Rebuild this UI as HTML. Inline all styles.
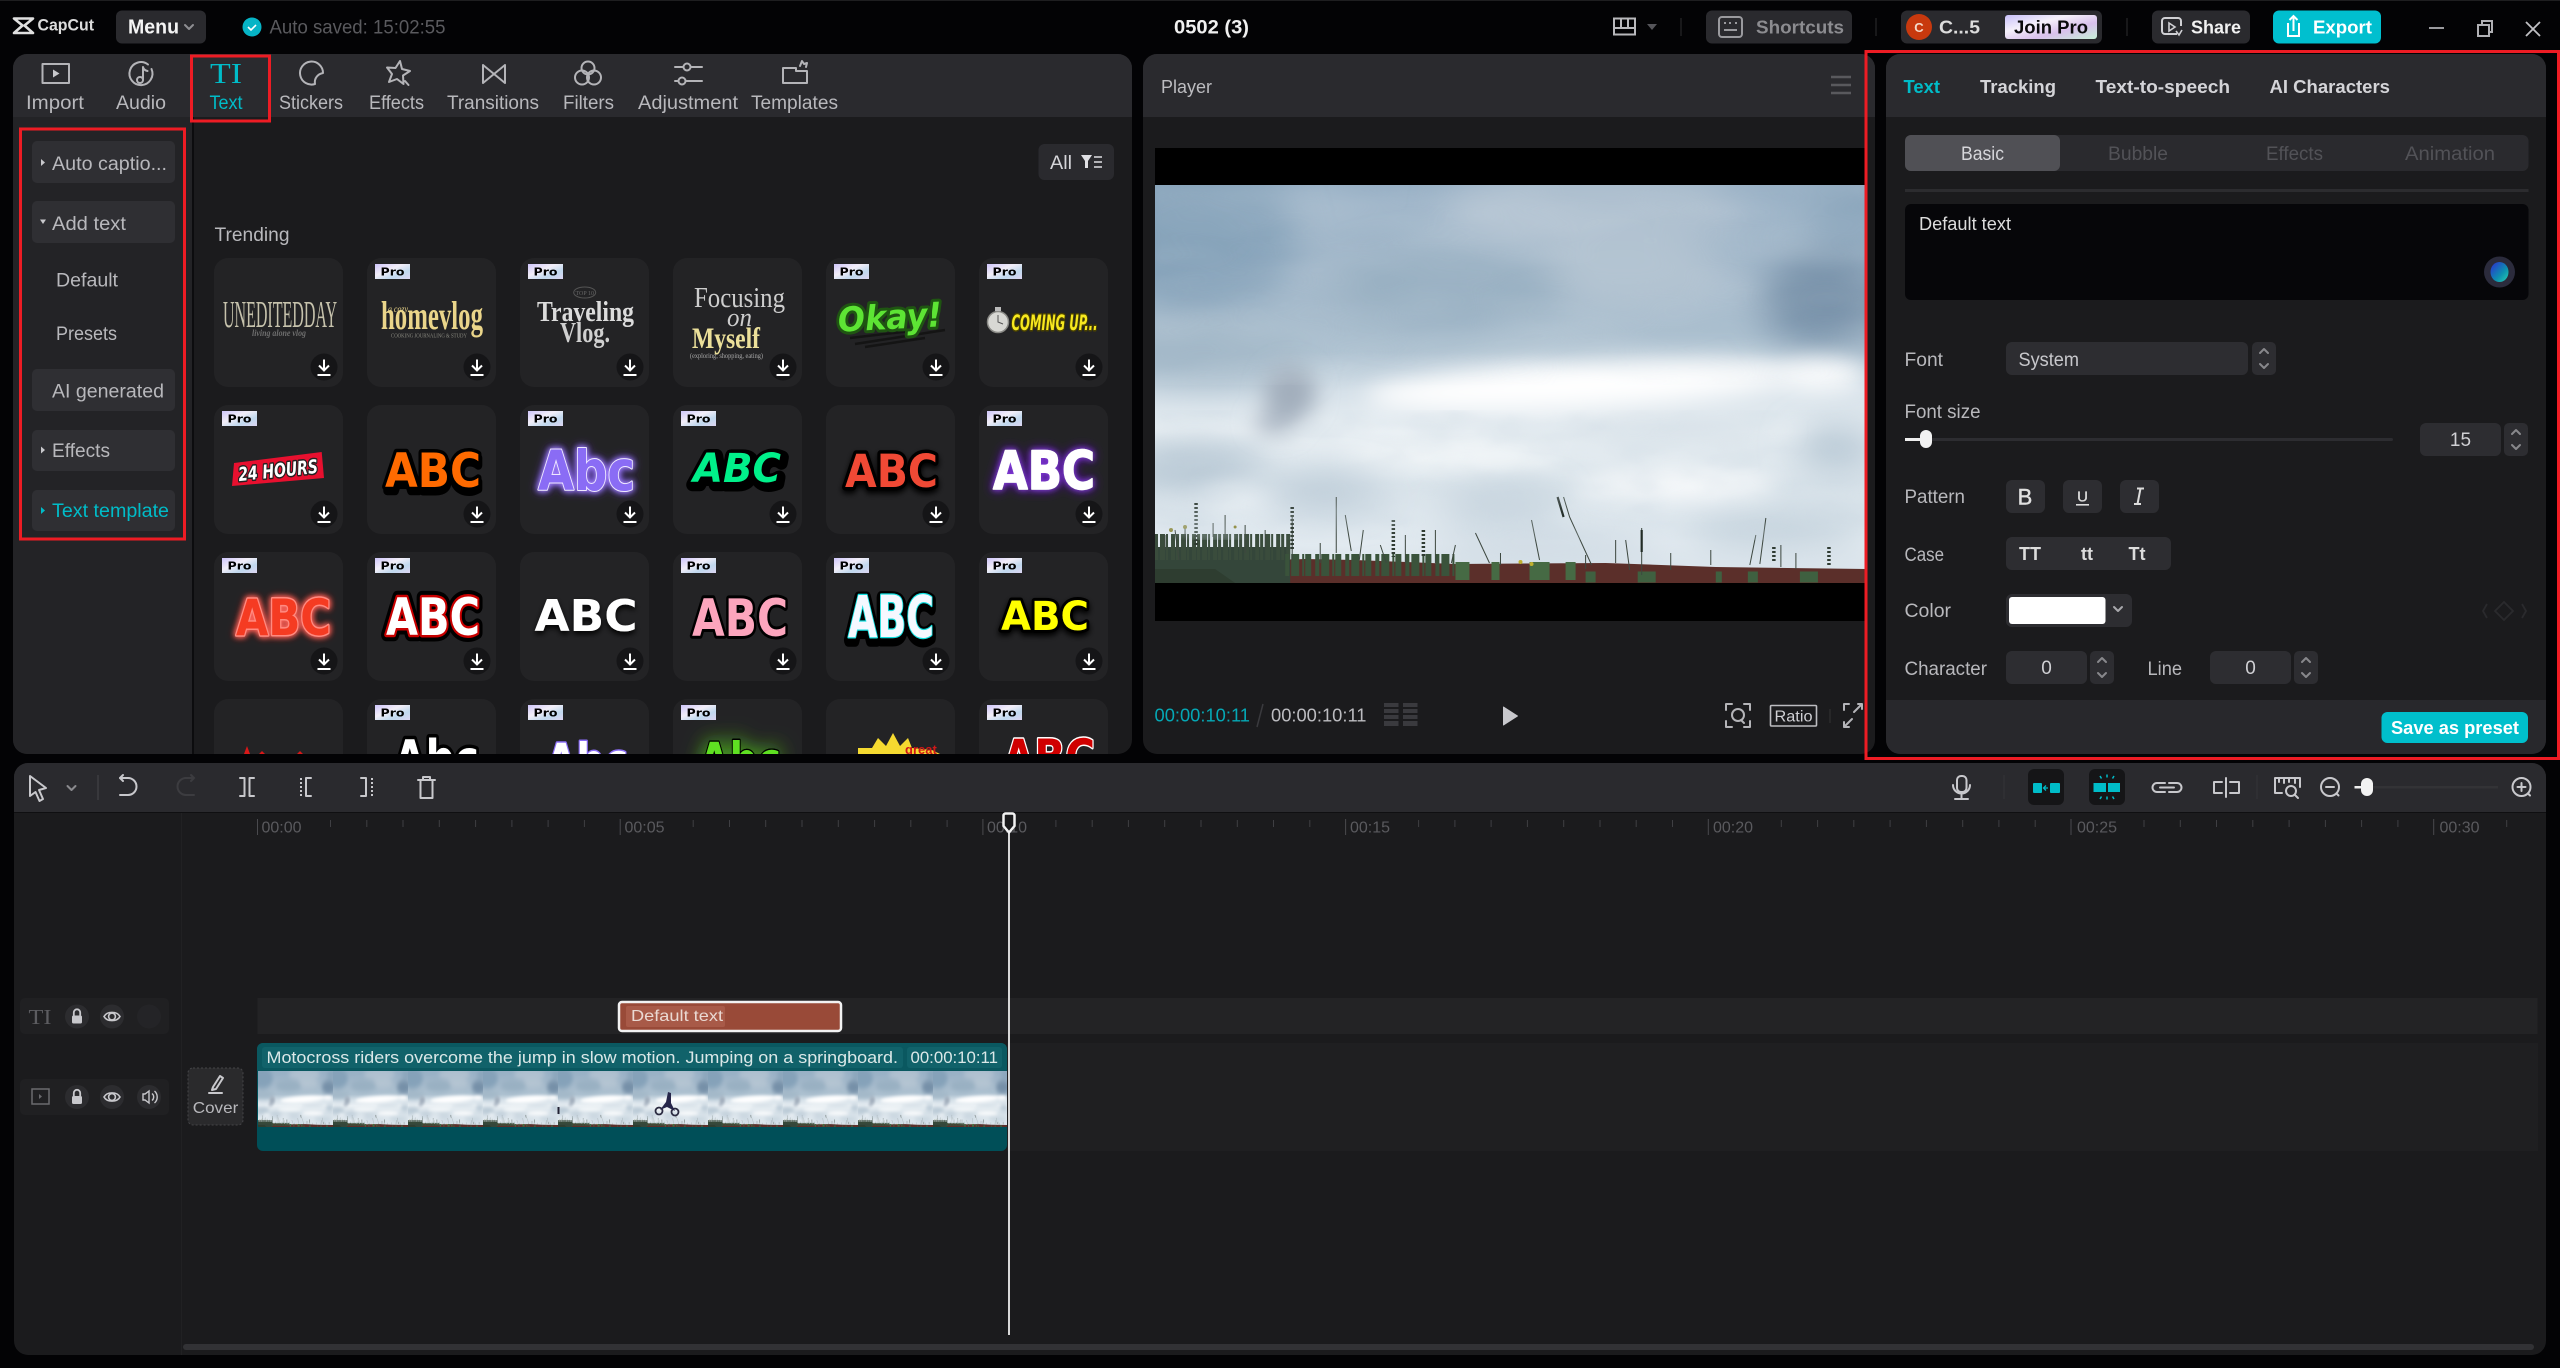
<!DOCTYPE html>
<html lang="en">
<head>
<meta charset="utf-8">
<title>CapCut</title>
<style>
html,body{margin:0;padding:0;background:#030305;width:2560px;height:1368px;overflow:hidden}
svg{display:block;position:absolute;left:0;top:0}
svg text{font-family:"Liberation Sans",sans-serif;white-space:pre}
.l{font-size:19px;fill:#b8b8bc}
.b{font-size:18px;font-weight:700;fill:#d4d4d8}
.sv{font-family:"Liberation Serif",serif!important}
.dj{font-family:"DejaVu Sans",sans-serif!important}
.ab{font-weight:700;paint-order:stroke fill;stroke-linejoin:round;font-family:"DejaVu Sans",sans-serif!important}
.i{fill:none;stroke:#b4b4b8;stroke-width:2;stroke-linecap:round;stroke-linejoin:round}
.d{fill:none;stroke:#c8c8cc;stroke-width:2;stroke-linecap:round;stroke-linejoin:round}
.st{fill:none;stroke:#88888c;stroke-width:2;stroke-linecap:round;stroke-linejoin:round}
.tl{font-size:16px;fill:#5a5a5e}
</style>
</head>
<body>
<svg width="2560" height="1368" viewBox="0 0 2560 1368" xmlns="http://www.w3.org/2000/svg">
<defs>
<clipPath id="pL"><rect x="13" y="54" width="1119" height="700" rx="14"/></clipPath>
<clipPath id="pP"><rect x="1143" y="54" width="732" height="700" rx="14"/></clipPath>
<clipPath id="pR"><rect x="1886" y="54" width="660" height="700" rx="14"/></clipPath>
<clipPath id="pT"><rect x="14" y="763" width="2532" height="592" rx="14"/></clipPath>
<clipPath id="vc"><rect width="710" height="398"/></clipPath>
<linearGradient id="proG" x1="0" y1="0" x2="1" y2="1"><stop offset="0" stop-color="#cfc6fa"/><stop offset=".4" stop-color="#f2eef8"/><stop offset=".7" stop-color="#c0d8ee"/><stop offset="1" stop-color="#ddd6f2"/></linearGradient>
<linearGradient id="joinG" x1="0" y1="0" x2="1" y2="1"><stop offset="0" stop-color="#c8c0fa"/><stop offset=".35" stop-color="#f5f0fa"/><stop offset=".65" stop-color="#d8c0ec"/><stop offset="1" stop-color="#c8f0d8"/></linearGradient>
<linearGradient id="skyG" x1="0" y1="0" x2="0" y2="1"><stop offset="0" stop-color="#98b0c5"/><stop offset=".22" stop-color="#a3b8ca"/><stop offset=".42" stop-color="#adc1d0"/><stop offset=".52" stop-color="#d6e1e9"/><stop offset=".62" stop-color="#eaf0f4"/><stop offset=".75" stop-color="#d9e3ea"/><stop offset=".9" stop-color="#e2eaf0"/><stop offset="1" stop-color="#d8e2ea"/></linearGradient>
<linearGradient id="orbG" x1="0" y1="0" x2="1" y2="1"><stop offset="0" stop-color="#2d2bd0"/><stop offset=".6" stop-color="#0d8fb0"/><stop offset="1" stop-color="#29d0b0"/></linearGradient>
<filter id="bl" x="-60%" y="-60%" width="220%" height="220%"><feGaussianBlur stdDeviation="18"/></filter>
<filter id="bl2" x="-40%" y="-80%" width="180%" height="260%"><feGaussianBlur stdDeviation="12"/></filter>
<filter id="bl3" x="-60%" y="-60%" width="220%" height="220%"><feGaussianBlur stdDeviation="11"/></filter>
<filter id="cn" x="0" y="0" width="100%" height="100%"><feTurbulence type="fractalNoise" baseFrequency=".005 .016" numOctaves="3" seed="8"/><feColorMatrix values="0 0 0 0 1 0 0 0 0 1 0 0 0 0 1 1.3 0 0 0 -.52"/><feGaussianBlur stdDeviation="4"/></filter>
<filter id="cd" x="0" y="0" width="100%" height="100%"><feTurbulence type="fractalNoise" baseFrequency=".006 .02" numOctaves="3" seed="21"/><feColorMatrix values="0 0 0 0 .5 0 0 0 0 .6 0 0 0 0 .68 1.3 0 0 0 -.54"/><feGaussianBlur stdDeviation="4"/></filter>
<filter id="cl" x="0" y="0" width="100%" height="100%"><feTurbulence type="fractalNoise" baseFrequency=".012 .035" numOctaves="4" seed="5"/><feColorMatrix values="0 0 0 0 .6 0 0 0 0 .69 0 0 0 0 .76 1.8 0 0 0 -.72"/><feGaussianBlur stdDeviation="2.500"/></filter>
<filter id="gPu" x="-40%" y="-50%" width="180%" height="200%"><feDropShadow dx="0" dy="0" stdDeviation="3" flood-color="#a888ff"/><feDropShadow dx="0" dy="0" stdDeviation="4" flood-color="#7a50f0"/></filter>
<filter id="gWh" x="-40%" y="-50%" width="180%" height="200%"><feDropShadow dx="0" dy="0" stdDeviation="3" flood-color="#8a40e0"/><feDropShadow dx="0" dy="0" stdDeviation="5" flood-color="#5a18b0"/></filter>
<filter id="gRe" x="-40%" y="-50%" width="180%" height="200%"><feDropShadow dx="0" dy="0" stdDeviation="3" flood-color="#ff6a60"/><feDropShadow dx="0" dy="0" stdDeviation="3" flood-color="#e03a30"/></filter>
<filter id="gGr" x="-40%" y="-60%" width="180%" height="220%"><feDropShadow dx="0" dy="0" stdDeviation="10" flood-color="#52c81e"/></filter>
<filter id="gBk" x="-30%" y="-40%" width="160%" height="180%"><feDropShadow dx="0" dy="3" stdDeviation="3" flood-color="#000"/></filter>

<g id="sky">
<rect width="710" height="398" fill="url(#skyG)"/>
<g filter="url(#bl)">
<ellipse cx="40" cy="50" rx="100" ry="75" fill="#85a2b9"/>
<ellipse cx="440" cy="25" rx="150" ry="40" fill="#b0c1d0"/>
<ellipse cx="470" cy="90" rx="100" ry="35" fill="#b4c4d2"/>
<ellipse cx="290" cy="105" rx="120" ry="40" fill="#99b0c2"/>
<ellipse cx="670" cy="115" rx="65" ry="48" fill="#7690a8"/>
<ellipse cx="695" cy="25" rx="45" ry="35" fill="#8ba6bc"/>
<ellipse cx="50" cy="170" rx="100" ry="30" fill="#a3b8c8"/>
<ellipse cx="40" cy="280" rx="70" ry="18" fill="#a9bccb"/>
<ellipse cx="170" cy="308" rx="55" ry="15" fill="#b6c6d3"/>
<ellipse cx="345" cy="318" rx="60" ry="10" fill="#b4c4d1"/>
<ellipse cx="680" cy="262" rx="40" ry="20" fill="#afc1cf"/>
<ellipse cx="620" cy="345" rx="90" ry="14" fill="#bacad6"/>
<ellipse cx="390" cy="362" rx="120" ry="10" fill="#c2d0db"/>
</g>
<g filter="url(#bl2)">
<ellipse cx="430" cy="200" rx="220" ry="24" fill="#fff" transform="rotate(-3 430 200)"/>
<ellipse cx="660" cy="190" rx="50" ry="16" fill="#fff"/>
<ellipse cx="300" cy="272" rx="110" ry="10" fill="#f8fafb"/>
<ellipse cx="520" cy="300" rx="100" ry="14" fill="#fbfcfd"/>
<ellipse cx="80" cy="312" rx="30" ry="8" fill="#f2f6f9"/>
<ellipse cx="520" cy="245" rx="110" ry="8" fill="#cdd9e2"/>
</g>
<g filter="url(#bl3)"><ellipse cx="135" cy="208" rx="26" ry="28" fill="#a2aebc"/><ellipse cx="120" cy="238" rx="22" ry="12" fill="#aeb9c6"/></g>
<path d="M0 398V372C60 368 110 376 150 374L200 375 300 379 450 378 560 382 710 384V398Z" fill="#5b2f2a"/>
<rect y="362" width="135" height="36" fill="#34463a"/>
<path d="M0 362H135" fill="none" stroke="#3a4c3c" stroke-width="26" stroke-dasharray="3 2 5 1 2 3 4 1"/>
<path d="M130 380H300" fill="none" stroke="#3a533b" stroke-width="22" stroke-dasharray="4 2 8 3 2 1 6 4"/>
<path d="M300 386H420" fill="none" stroke="#466a44" stroke-width="18" stroke-dasharray="14 22 8 30 20 16"/>
<path d="M430 392H710" fill="none" stroke="#3f6040" stroke-width="11" stroke-dasharray="10 42 18 60 6 26"/>
<path d="M0 398V384H60L80 398Z" fill="#2e3d30"/>
<g fill="none" stroke="#3d473f" stroke-width="1">
<path d="M137 330V375M181 312V368M190 330l6 36M208 345l-4 30M408 312l6 20 22 48M376 335l8 40M486 343V390M470 355l4 30M460 355V378M610 333l-6 46M515 368V385M280 345V378M20 345l4 30M90 340V368M70 330V355M58 338V352M320 348l14 30M345 368V380M555 365V380M110 345V365M10 350V365M30 340V358M165 358V378M225 360l6 18M250 350V378M300 360l-4 18M430 370V384M600 350l-6 30M625 360V382M640 368V384"/>
</g>
<g fill="none" stroke="#2f3b32" stroke-width="3.500" stroke-dasharray="2 2">
<path d="M41 318V362M137 322V365M238 335V372M268 345V372M673 362V380M618 362V378"/>
</g>
<path d="M402 312l6 20M486 345v22" fill="none" stroke="#222c26" stroke-width="2.200"/>
<circle cx="16" cy="345" r="2" fill="#8e8a3a"/><circle cx="30" cy="342" r="2" fill="#8e8a3a"/><circle cx="80" cy="342" r="1.500" fill="#8e8a3a"/><circle cx="365" cy="377" r="2" fill="#c0b030"/><circle cx="376" cy="379" r="2" fill="#c0b030"/>
</g>

<g id="dl"><circle r="13.5" fill="#151517"/><path d="M0-7.5V3.5M-5-1.5L0 3.5 5-1.5M-6.5 8H6.5" fill="none" stroke="#fff" stroke-width="2"/></g>
<g id="pro"><rect width="35" height="15" fill="url(#proG)"/><text x="5.5" y="11.5" class="dj" font-size="11" font-weight="700" textLength="24" lengthAdjust="spacingAndGlyphs" fill="#000">Pro</text></g>
<path id="chev" d="M-4-2L0 2 4-2" fill="none" stroke-linecap="round" stroke-linejoin="round" stroke-width="2"/>
<g id="stp"><rect x="-12" y="-16.5" width="24" height="33" rx="5" fill="#2d2d31"/><path class="st" d="M-4-5.5L0-9.5 4-5.5M-4 5.5L0 9.5 4 5.5"/></g>
<g id="tk" fill="#3f3f43"><rect x="72.5" width="1" height="7"/><rect x="108.8" width="1" height="7"/><rect x="145" width="1" height="7"/><rect x="181.3" width="1" height="7"/><rect x="217.6" width="1" height="7"/><rect x="253.9" width="1" height="7"/><rect x="290.1" width="1" height="7"/><rect x="326.4" width="1" height="7"/></g>
<g id="lock"><rect x="-5" y="-1" width="10" height="8" rx="1.5" fill="#c8c8cc"/><path d="M-3.2-1V-4a3.2 3.2 0 0 1 6.4 0V-1" fill="none" stroke="#c8c8cc" stroke-width="1.8"/></g>
<g id="eye"><path d="M-8 0C-5-5.5 5-5.5 8 0 5 5.5-5 5.5-8 0Z" fill="none" stroke="#c8c8cc" stroke-width="1.6"/><circle r="3.4" fill="none" stroke="#c8c8cc" stroke-width="1.6"/></g>
<clipPath id="vcl"><rect x="257" y="1043" width="750" height="108" rx="6"/></clipPath>
</defs>

<rect width="2560" height="1" fill="#1e1e20"/>

<!-- TOP BAR -->
<path d="M14 18.5H33L24.5 25.5 33 33H14L22.5 25.5Z" fill="none" stroke="#e0e0e0" stroke-width="2.6" stroke-linejoin="round"/>
<text x="37.5" y="30.5" font-size="17" font-weight="700" fill="#dcdcdc" textLength="56.5" lengthAdjust="spacingAndGlyphs">CapCut</text>
<rect x="116" y="10.5" width="90" height="33" rx="6" fill="#2a2a2e"/>
<text x="128" y="33.5" font-size="20" font-weight="700" fill="#f4f4f4" textLength="51" lengthAdjust="spacingAndGlyphs">Menu</text>
<use href="#chev" x="189" y="27" stroke="#8e8e92"/>
<circle cx="252" cy="27" r="9.5" fill="#06b4c6"/><path d="M248 27l3 3 5-5" fill="none" stroke="#fff" stroke-width="1.6"/>
<text x="269.5" y="33.5" font-size="19" fill="#5a5a5e" textLength="176" lengthAdjust="spacingAndGlyphs">Auto saved: 15:02:55</text>
<text x="1174" y="33.5" font-size="19" font-weight="700" fill="#f0f0f0" textLength="75" lengthAdjust="spacingAndGlyphs">0502 (3)</text>
<g fill="none" stroke="#b8b8bc" stroke-width="2"><rect x="1614" y="18.5" width="21" height="16"/><path d="M1621 18.5V28M1628 18.5V28M1614 28H1635"/></g>
<path d="M1647 24H1657L1652 30Z" fill="#55555a"/>
<rect x="1680.5" y="18" width="1" height="18" fill="#2d2d30"/>
<rect x="1706" y="10.5" width="146" height="33" rx="6" fill="#2a2a2e"/>
<g fill="none" stroke="#9a9a9e" stroke-width="2"><rect x="1719" y="17" width="23" height="20" rx="3"/><path d="M1724 23h2M1729 23h2M1735 23h2M1724 30h13"/></g>
<text x="1756" y="33.5" font-size="18" font-weight="700" fill="#8c8c90" textLength="88" lengthAdjust="spacingAndGlyphs">Shortcuts</text>
<rect x="1875.5" y="18" width="1" height="18" fill="#2d2d30"/>
<rect x="1901" y="10.5" width="201" height="33" rx="6" fill="#2a2a2e"/>
<circle cx="1919" cy="27" r="13" fill="#c8390e"/><text x="1919" y="32" font-size="13" text-anchor="middle" fill="#f3d8c8" font-weight="700">C</text>
<text x="1939" y="33.5" font-size="18" font-weight="700" fill="#dcdcdc" textLength="41" lengthAdjust="spacingAndGlyphs">C...5</text>
<rect x="2005" y="15" width="92" height="24" rx="3" fill="url(#joinG)"/>
<text x="2014" y="33.5" font-size="18" font-weight="700" fill="#0a0a0c" textLength="74" lengthAdjust="spacingAndGlyphs">Join Pro</text>
<rect x="2126.5" y="18" width="1" height="18" fill="#2d2d30"/>
<rect x="2152" y="10.5" width="98" height="33" rx="6" fill="#2a2a2e"/>
<path d="M2177 34H2165a3 3 0 0 1-3-3V21a3 3 0 0 1 3-3H2178a3 3 0 0 1 3 3V26" fill="none" stroke="#d0d0d4" stroke-width="2"/><path d="M2169 23l6 4-6 4ZM2176 31l3 4 3-5" fill="none" stroke="#d0d0d4" stroke-width="1.6"/>
<text x="2191" y="33.5" font-size="18" font-weight="700" fill="#f2f2f2" textLength="50" lengthAdjust="spacingAndGlyphs">Share</text>
<rect x="2273" y="10.5" width="108" height="33" rx="6" fill="#00bfcf"/>
<path d="M2288 23V36H2299V23M2293.5 31V16M2289.5 20l4-4 4 4" fill="none" stroke="#fff" stroke-width="2"/>
<text x="2313" y="33.5" font-size="18" font-weight="700" fill="#fff" textLength="59" lengthAdjust="spacingAndGlyphs">Export</text>
<rect x="2429" y="27" width="15" height="2" fill="#9a9a9e"/>
<g fill="none" stroke="#b0b0b4" stroke-width="2"><rect x="2478" y="25" width="11" height="11"/><path d="M2482 25V21H2492V32H2489"/></g>
<path d="M2526 22L2540 36M2540 22L2526 36" stroke="#c0c0c4" stroke-width="1.8"/>

<!-- LEFT PANEL -->
<g clip-path="url(#pL)">
<rect x="13" y="54" width="1119" height="700" fill="#1b1b1d"/>
<rect x="13" y="117" width="180" height="637" fill="#232326"/>
<rect x="192" y="117" width="2" height="637" fill="#0c0c0e"/>
<rect x="13" y="54" width="1119" height="63" fill="#2a2a2e"/>
</g>
<!-- tab icons -->
<rect x="42.5" y="64" width="26.5" height="19" class="i"/><path d="M53 69.5l6.5 4-6.5 4Z" fill="#c8c8cc"/>
<path class="i" d="M148 64.5A11.5 11.5 0 1 0 151.500 69"/><path class="i" d="M143 67V80M143 67c.5 2.500 2.500 3.500 4.500 4"/><circle class="i" cx="140" cy="80" r="3"/>
<text x="210" y="83" class="sv" font-size="29" fill="#00bcc8" textLength="32" lengthAdjust="spacingAndGlyphs">TI</text>
<path class="i" d="M323 73A11.500 11.500 0 1 0 315 84C314 78 318 74 323 73Z"/>
<path class="i" d="M400 61l2 8 8 2-7 4.500 .5 8.500-6.500-5-8 3 3-8-5-6.500 8.500 .5ZM405 81l3.500 4"/>
<path class="i" d="M483 65V83M505 65V83M483 65L505 83M505 65L483 83" stroke-width="1.800"/>
<g class="i"><circle cx="588" cy="68" r="6.5"/><circle cx="582" cy="77.5" r="7"/><circle cx="594" cy="77.5" r="7"/></g>
<path class="i" d="M675 67H683M691 67H702M675 81H678M686 81H702"/><circle class="i" cx="687" cy="67" r="3.5"/><circle class="i" cx="682" cy="81" r="3.5"/>
<path class="i" d="M783 68H796V71H807V83H783ZM800 66l2-5 2 3 3-1-1 4"/>

<text x="26" y="109" class="l" textLength="58" lengthAdjust="spacingAndGlyphs">Import</text>
<text x="116" y="109" class="l" textLength="50" lengthAdjust="spacingAndGlyphs">Audio</text>
<text x="209.5" y="109" class="l" style="fill:#00bcc8" textLength="33" lengthAdjust="spacingAndGlyphs">Text</text>
<text x="279" y="109" class="l" textLength="64" lengthAdjust="spacingAndGlyphs">Stickers</text>
<text x="369" y="109" class="l" textLength="55" lengthAdjust="spacingAndGlyphs">Effects</text>
<text x="447" y="109" class="l" textLength="92" lengthAdjust="spacingAndGlyphs">Transitions</text>
<text x="563" y="109" class="l" textLength="51" lengthAdjust="spacingAndGlyphs">Filters</text>
<text x="638" y="109" class="l" textLength="100" lengthAdjust="spacingAndGlyphs">Adjustment</text>
<text x="751" y="109" class="l" textLength="87" lengthAdjust="spacingAndGlyphs">Templates</text>

<!-- sidebar -->
<g fill="#2f2f33"><rect x="32" y="141" width="143" height="42" rx="5"/><rect x="32" y="201" width="143" height="42" rx="5"/><rect x="32" y="369" width="143" height="42" rx="5"/><rect x="32" y="430" width="143" height="41" rx="5"/><rect x="32" y="490" width="143" height="41" rx="5"/></g>
<path d="M41 159l4 3.5-4 3.5Z" fill="#c8c8cc"/><path d="M40 219.500h6l-3 4.500Z" fill="#c8c8cc"/><path d="M41 446.500l4 3.500-4 3.500Z" fill="#c8c8cc"/><path d="M41 507l4 3.500-4 3.500Z" fill="#00bcc8"/>
<text x="52" y="170" class="l" textLength="115" lengthAdjust="spacingAndGlyphs">Auto captio...</text>
<text x="52" y="230" class="l" textLength="74" lengthAdjust="spacingAndGlyphs">Add text</text>
<text x="56" y="286.500" class="l" textLength="62" lengthAdjust="spacingAndGlyphs">Default</text>
<text x="56" y="340" class="l" textLength="61" lengthAdjust="spacingAndGlyphs">Presets</text>
<text x="52" y="397.500" class="l" textLength="112" lengthAdjust="spacingAndGlyphs">AI generated</text>
<text x="52" y="457" class="l" textLength="58" lengthAdjust="spacingAndGlyphs">Effects</text>
<text x="52" y="517" class="l" style="fill:#00bcc8" textLength="117" lengthAdjust="spacingAndGlyphs">Text template</text>

<!-- grid -->
<rect x="1038.500" y="144" width="75.500" height="36" rx="6" fill="#2a2a2e"/>
<text x="1050" y="169" class="l" style="fill:#d4d4d8" textLength="22" lengthAdjust="spacingAndGlyphs">All</text>
<path d="M1081 155H1092L1088 161V168H1085V161Z" fill="#e0e0e4"/><path d="M1094 157H1102M1094 162H1102M1094 167H1102" stroke="#e0e0e4" stroke-width="1.6"/>
<text x="214.500" y="241" class="l" textLength="75" lengthAdjust="spacingAndGlyphs">Trending</text>

<g clip-path="url(#pL)">
<g fill="#232325">
<rect x="214" y="258" width="129" height="129" rx="14"/><rect x="367" y="258" width="129" height="129" rx="14"/><rect x="520" y="258" width="129" height="129" rx="14"/><rect x="673" y="258" width="129" height="129" rx="14"/><rect x="826" y="258" width="129" height="129" rx="14"/><rect x="979" y="258" width="129" height="129" rx="14"/>
<rect x="214" y="405" width="129" height="129" rx="14"/><rect x="367" y="405" width="129" height="129" rx="14"/><rect x="520" y="405" width="129" height="129" rx="14"/><rect x="673" y="405" width="129" height="129" rx="14"/><rect x="826" y="405" width="129" height="129" rx="14"/><rect x="979" y="405" width="129" height="129" rx="14"/>
<rect x="214" y="552" width="129" height="129" rx="14"/><rect x="367" y="552" width="129" height="129" rx="14"/><rect x="520" y="552" width="129" height="129" rx="14"/><rect x="673" y="552" width="129" height="129" rx="14"/><rect x="826" y="552" width="129" height="129" rx="14"/><rect x="979" y="552" width="129" height="129" rx="14"/>
<rect x="214" y="699" width="129" height="129" rx="14"/><rect x="367" y="699" width="129" height="129" rx="14"/><rect x="520" y="699" width="129" height="129" rx="14"/><rect x="673" y="699" width="129" height="129" rx="14"/><rect x="826" y="699" width="129" height="129" rx="14"/><rect x="979" y="699" width="129" height="129" rx="14"/>
</g>

<!-- row 1 -->
<text x="223" y="327" class="sv" font-size="38" fill="#c6c2ac" textLength="114" lengthAdjust="spacingAndGlyphs">UNEDITEDDAY</text>
<text x="252" y="336" class="sv" font-size="9" font-style="italic" font-weight="700" fill="#6e6e6e" textLength="54" lengthAdjust="spacingAndGlyphs">living alone vlog</text>

<text x="388" y="312" class="sv" font-size="9" font-style="italic" fill="#e8d388" textLength="20" lengthAdjust="spacingAndGlyphs">a cozy</text>
<text x="381" y="329" class="sv" font-size="40" font-weight="700" fill="#ead58a" textLength="102" lengthAdjust="spacingAndGlyphs">homevlog</text>
<text x="391" y="337.500" class="sv" font-size="6.500" fill="#8a8a80" textLength="76" lengthAdjust="spacingAndGlyphs">COOKING JOURNALING &amp; STUDY</text>

<ellipse cx="584.700" cy="292.500" rx="11" ry="5.500" fill="none" stroke="#555" stroke-width="1"/>
<text x="584.700" y="295" class="sv" font-size="6" text-anchor="middle" fill="#666">TOP 10</text>
<text x="537" y="321" class="sv" font-size="28" font-weight="700" fill="#dcdcdc" textLength="97" lengthAdjust="spacingAndGlyphs">Traveling</text>
<text x="560" y="342" class="sv" font-size="28" font-weight="700" fill="#d0d0d0" textLength="50" lengthAdjust="spacingAndGlyphs">Vlog.</text>

<text x="694" y="307" class="sv" font-size="29" fill="#cdcdcd" textLength="91" lengthAdjust="spacingAndGlyphs">Focusing</text>
<text x="727" y="326" class="sv" font-size="26" font-style="italic" fill="#cdcdcd" textLength="25" lengthAdjust="spacingAndGlyphs">on</text>
<text x="692" y="348" class="sv" font-size="30" font-weight="700" fill="#ece09a" textLength="68" lengthAdjust="spacingAndGlyphs">Myself</text>
<text x="690" y="358" class="sv" font-size="7" fill="#aaa" textLength="73" lengthAdjust="spacingAndGlyphs">(exploring, shopping, eating)</text>

<path d="M855 344L945 330M865 347L925 338M850 338L920 330" stroke="#141414" stroke-width="2.500"/>
<text x="838" y="329" font-size="34" font-style="italic" class="ab" fill="#5de434" stroke="#1f5512" stroke-width="6" textLength="104" lengthAdjust="spacingAndGlyphs" transform="rotate(-3 890 320)">Okay!</text>

<circle cx="998" cy="322" r="10.500" fill="#d8d8d4" stroke="#8a8a86" stroke-width="1.500"/><path d="M998 315v7l5 2" stroke="#555" fill="none"/><rect x="995" y="307" width="6" height="4" fill="#bbb"/>
<text x="1011.500" y="330" font-size="21" font-style="italic" class="ab" fill="#f7e81f" stroke="#4a4200" stroke-width="3" textLength="86" lengthAdjust="spacingAndGlyphs">COMING UP...</text>

<!-- row 2 -->
<path d="M234 463L321.700 452 324 478 232 486Z" fill="#e8102f"/>
<text x="238" y="477" font-size="19" font-style="italic" class="ab" fill="#fff" stroke="#222" stroke-width="3" textLength="80" lengthAdjust="spacingAndGlyphs" transform="rotate(-6 278 470)">24 HOURS</text>

<text x="387" y="491" font-size="47" class="ab" fill="#000" stroke="#000" stroke-width="9" textLength="94" lengthAdjust="spacingAndGlyphs">ABC</text>
<text x="385" y="487" font-size="47" class="ab" fill="#ff6a00" stroke="#000" stroke-width="7" textLength="96" lengthAdjust="spacingAndGlyphs">ABC</text>

<text x="538" y="490" font-size="55" class="ab" fill="#8a6cf5" stroke="#efe9ff" stroke-width="2" textLength="97" lengthAdjust="spacingAndGlyphs" filter="url(#gPu)">Abc</text>

<text x="695" y="485" font-size="40" font-style="italic" class="ab" fill="#000" stroke="#000" stroke-width="13" textLength="88" lengthAdjust="spacingAndGlyphs">ABC</text>
<text x="693" y="482" font-size="40" font-style="italic" class="ab" fill="#00f08a" stroke="#000" stroke-width="6" textLength="88" lengthAdjust="spacingAndGlyphs">ABC</text>

<text x="845" y="487" font-size="45" class="ab" fill="#f04a35" stroke="#000" stroke-width="7" textLength="93" lengthAdjust="spacingAndGlyphs" filter="url(#gBk)">ABC</text>

<text x="993" y="489" font-size="53" class="ab" fill="#fff" stroke="#fff" stroke-width="1.500" textLength="102" lengthAdjust="spacingAndGlyphs" filter="url(#gWh)">ABC</text>

<!-- row 3 -->
<text x="236" y="635" font-size="50" class="ab" fill="#f53a20" stroke="#ff8a80" stroke-width="3" textLength="95" lengthAdjust="spacingAndGlyphs" filter="url(#gRe)">ABC</text>
<text x="386" y="635" font-size="52" class="ab" fill="#000" stroke="#000" stroke-width="13" textLength="94" lengthAdjust="spacingAndGlyphs">ABC</text>
<text x="386" y="635" font-size="52" class="ab" fill="#fff" stroke="#c80000" stroke-width="5" textLength="94" lengthAdjust="spacingAndGlyphs">ABC</text>
<text x="534.500" y="631" font-size="44" class="ab" fill="#fff" textLength="103" lengthAdjust="spacingAndGlyphs" filter="url(#gBk)">ABC</text>
<text x="692" y="636" font-size="52" class="ab" fill="#fca5bd" stroke="#000" stroke-width="6" textLength="96" lengthAdjust="spacingAndGlyphs">ABC</text>
<text x="848" y="640" font-size="58" class="ab" fill="#000" stroke="#000" stroke-width="13" textLength="86" lengthAdjust="spacingAndGlyphs">ABC</text>
<text x="848" y="637" font-size="58" class="ab" fill="#f5f8ff" stroke="#10e0e0" stroke-width="2.500" textLength="86" lengthAdjust="spacingAndGlyphs">ABC</text>
<text x="1001" y="630" font-size="40" class="ab" fill="#ffff00" stroke="#000" stroke-width="6" textLength="88" lengthAdjust="spacingAndGlyphs" filter="url(#gBk)">ABC</text>

<!-- row 4 -->
<path d="M247 746l3 8h-6ZM262 751l3 3h-6ZM300 751l3 3h-6Z" fill="#d81818"/>
<text x="394" y="777" font-size="52" class="ab" fill="#fff" stroke="#000" stroke-width="7" textLength="85" lengthAdjust="spacingAndGlyphs">Abc</text>
<text x="546" y="779" font-size="50" class="ab" fill="#fff" stroke="#8a6cf5" stroke-width="3" textLength="82" lengthAdjust="spacingAndGlyphs">Abc</text>
<text x="699" y="778" font-size="50" class="ab" fill="#5ee020" stroke="#000" stroke-width="3" textLength="82" lengthAdjust="spacingAndGlyphs" filter="url(#gGr)">Abc</text>
<path d="M858 748l14 0 6-10 8 8 7-13 7 13 8-8 4 10 20 2 8 4H858Z" fill="#f5da30"/>
<text x="905" y="754" font-size="13" font-weight="700" fill="#d01818">great</text>
<text x="1003" y="775" font-size="50" class="ab" fill="#d00000" stroke="#fff" stroke-width="3" textLength="92" lengthAdjust="spacingAndGlyphs">ABC</text>

<!-- download + pro -->
<use href="#dl" x="324" y="367"/><use href="#dl" x="477" y="367"/><use href="#dl" x="630" y="367"/><use href="#dl" x="783" y="367"/><use href="#dl" x="936" y="367"/><use href="#dl" x="1089" y="367"/>
<use href="#dl" x="324" y="514"/><use href="#dl" x="477" y="514"/><use href="#dl" x="630" y="514"/><use href="#dl" x="783" y="514"/><use href="#dl" x="936" y="514"/><use href="#dl" x="1089" y="514"/>
<use href="#dl" x="324" y="661"/><use href="#dl" x="477" y="661"/><use href="#dl" x="630" y="661"/><use href="#dl" x="783" y="661"/><use href="#dl" x="936" y="661"/><use href="#dl" x="1089" y="661"/>
<use href="#pro" x="375" y="264"/><use href="#pro" x="528" y="264"/><use href="#pro" x="834" y="264"/><use href="#pro" x="987" y="264"/>
<use href="#pro" x="222" y="411"/><use href="#pro" x="528" y="411"/><use href="#pro" x="681" y="411"/><use href="#pro" x="987" y="411"/>
<use href="#pro" x="222" y="558"/><use href="#pro" x="375" y="558"/><use href="#pro" x="681" y="558"/><use href="#pro" x="834" y="558"/><use href="#pro" x="987" y="558"/>
<use href="#pro" x="375" y="705"/><use href="#pro" x="528" y="705"/><use href="#pro" x="681" y="705"/><use href="#pro" x="987" y="705"/>
</g>

<!-- PLAYER -->
<g clip-path="url(#pP)">
<rect x="1143" y="54" width="732" height="700" fill="#1b1b1d"/>
<rect x="1143" y="54" width="732" height="63" fill="#2a2a2e"/>
</g>
<text x="1161" y="93" font-size="18" fill="#bcbcc0" textLength="51" lengthAdjust="spacingAndGlyphs">Player</text>
<path d="M1831 77H1851M1831 85H1851M1831 93H1851" stroke="#59595d" stroke-width="2.500"/>
<rect x="1155" y="148" width="711" height="473" fill="#000"/>
<svg x="1155" y="185" width="711" height="398" viewBox="0 0 710 398" preserveAspectRatio="none">
<g clip-path="url(#vc)"><use href="#sky"/>
<rect width="710" height="200" filter="url(#cn)" opacity=".22"/>
<rect width="710" height="200" filter="url(#cd)" opacity=".2"/>
<rect y="225" width="710" height="130" filter="url(#cl)" opacity=".5"/>
</g></svg>
<text x="1154.500" y="721.500" font-size="18" fill="#05a8b5" textLength="95.500" lengthAdjust="spacingAndGlyphs">00:00:10:11</text>
<path d="M1257 727L1263 704" stroke="#3a3a3e" stroke-width="1.500"/>
<text x="1271" y="721.500" font-size="18" fill="#bcbcc0" textLength="95.500" lengthAdjust="spacingAndGlyphs">00:00:10:11</text>
<g fill="#3a3a3e"><rect x="1384" y="703" width="14.500" height="4"/><rect x="1403" y="703" width="14.500" height="4"/><rect x="1384" y="709" width="14.500" height="4"/><rect x="1403" y="709" width="14.500" height="4"/><rect x="1384" y="715" width="14.500" height="4"/><rect x="1403" y="715" width="14.500" height="4"/><rect x="1384" y="721" width="14.500" height="5"/><rect x="1403" y="721" width="14.500" height="5"/></g>
<path d="M1503.500 707L1517.500 716 1503.500 725Z" fill="#c8c8cc" stroke="#c8c8cc" stroke-width="1" stroke-linejoin="round"/>
<path class="i" d="M1726 710V704H1732M1744 704H1750V710M1726 721V727H1732M1744 727H1750V721"/><circle class="i" cx="1738" cy="715" r="6"/><path class="i" d="M1741 720l3 3"/>
<rect x="1770.500" y="705.500" width="46" height="20.500" rx="1" fill="none" stroke="#bcbcc0" stroke-width="1.600"/>
<text x="1793.500" y="721.500" font-size="16" text-anchor="middle" fill="#d0d0d4" textLength="38" lengthAdjust="spacingAndGlyphs">Ratio</text>
<rect x="1829.500" y="709" width="1" height="14" fill="#333"/>
<path class="i" d="M1844 710V704H1849M1858 704H1862V709M1844 722V727H1849M1862 704L1854 712M1844 727L1852 719"/>

<!-- RIGHT PANEL -->
<g clip-path="url(#pR)">
<rect x="1886" y="54" width="660" height="700" fill="#1b1b1d"/>
<rect x="1886" y="54" width="660" height="63" fill="#2a2a2e"/>
<rect x="1886" y="700" width="660" height="54" fill="#28282c"/>
</g>
<text x="1903.500" y="93" class="b" style="fill:#00bcc8" textLength="36.500" lengthAdjust="spacingAndGlyphs">Text</text>
<text x="1980" y="93" class="b" textLength="76" lengthAdjust="spacingAndGlyphs">Tracking</text>
<text x="2095.500" y="93" class="b" textLength="134.500" lengthAdjust="spacingAndGlyphs">Text-to-speech</text>
<text x="2269.500" y="93" class="b" textLength="120.500" lengthAdjust="spacingAndGlyphs">AI Characters</text>
<rect x="1905" y="135" width="623.500" height="36" rx="6" fill="#2a2a2e"/>
<rect x="1905" y="135" width="155" height="36" rx="6" fill="#505055"/>
<text x="1961" y="160" class="l" style="fill:#d6d6da" textLength="43" lengthAdjust="spacingAndGlyphs">Basic</text>
<text x="2108" y="160" class="l" style="fill:#525257" textLength="60" lengthAdjust="spacingAndGlyphs">Bubble</text>
<text x="2266" y="160" class="l" style="fill:#525257" textLength="57" lengthAdjust="spacingAndGlyphs">Effects</text>
<text x="2405" y="160" class="l" style="fill:#525257" textLength="90" lengthAdjust="spacingAndGlyphs">Animation</text>
<rect x="1905" y="189" width="623.500" height="3" fill="#2c2c2f"/>
<rect x="1905" y="204" width="623.500" height="96" rx="6" fill="#060609"/>
<text x="1919" y="230" font-size="18" fill="#dcdcdc" textLength="92" lengthAdjust="spacingAndGlyphs">Default text</text>
<circle cx="2499.500" cy="272" r="15.500" fill="#2b2b3c"/><ellipse cx="2499.500" cy="272" rx="9" ry="10" fill="url(#orbG)"/>

<text x="1904.500" y="366" class="l" textLength="38.500" lengthAdjust="spacingAndGlyphs">Font</text>
<rect x="2006" y="342" width="242" height="33" rx="6" fill="#2d2d31"/>
<text x="2018.500" y="366" class="l" style="fill:#c8c8cc" textLength="60.500" lengthAdjust="spacingAndGlyphs">System</text>
<use href="#stp" x="2264" y="358.500"/>
<text x="1904.500" y="418" class="l" textLength="76" lengthAdjust="spacingAndGlyphs">Font size</text>
<rect x="1905" y="438" width="488" height="3" rx="1.500" fill="#2d2d31"/>
<rect x="1905" y="438" width="18" height="3" fill="#eee"/>
<rect x="1920" y="430" width="12" height="18" rx="6" fill="#f2f2f2"/>
<rect x="2420" y="423" width="81" height="33" rx="6" fill="#2d2d31"/>
<text x="2460.500" y="446" class="l" style="fill:#d0d0d4" text-anchor="middle">15</text>
<use href="#stp" x="2516" y="439.500"/>
<text x="1904.500" y="503" class="l" textLength="60.500" lengthAdjust="spacingAndGlyphs">Pattern</text>
<g fill="#2d2d31"><rect x="2006" y="480" width="39" height="33" rx="6"/><rect x="2063" y="480" width="39" height="33" rx="6"/><rect x="2120" y="480" width="39" height="33" rx="6"/><rect x="2006" y="537" width="165" height="33" rx="6"/><rect x="2006" y="594" width="126" height="33" rx="6"/><rect x="2006" y="651" width="81" height="33" rx="6"/><rect x="2210" y="651" width="81" height="33" rx="6"/></g>
<text x="2025" y="504.500" font-size="22" text-anchor="middle" fill="#e0e0e0" stroke="#e0e0e0" stroke-width=".4">B</text>
<text x="2082.500" y="501.500" font-size="15" text-anchor="middle" fill="#dcdcdc" stroke="#dcdcdc" stroke-width=".3">U</text><rect x="2076" y="504" width="13" height="1.600" fill="#dcdcdc"/>
<path d="M2137 488.500h7M2134 504h7M2140.500 488.500l-3 15.500" stroke="#dcdcdc" stroke-width="2" fill="none"/>
<text x="1904.500" y="561" class="l" textLength="39.500" lengthAdjust="spacingAndGlyphs">Case</text>
<text x="2030" y="560" font-size="18" font-weight="700" text-anchor="middle" fill="#dcdcdc">TT</text>
<text x="2087" y="560" font-size="18" font-weight="700" text-anchor="middle" fill="#dcdcdc">tt</text>
<text x="2137" y="560" font-size="18" font-weight="700" text-anchor="middle" fill="#dcdcdc">Tt</text>
<text x="1904.500" y="617" class="l" textLength="46.500" lengthAdjust="spacingAndGlyphs">Color</text>
<rect x="2009" y="597" width="96.500" height="27" rx="3" fill="#fff"/>
<use href="#chev" x="2118" y="609" stroke="#a8a8ac"/>
<path d="M2487 604l-4 7 4 7M2522 604l4 7-4 7M2504 602l9 9-9 9-9-9Z" fill="none" stroke="#2a2a2d" stroke-width="1.800"/>
<text x="1904.500" y="675" class="l" textLength="82.500" lengthAdjust="spacingAndGlyphs">Character</text>
<text x="2046.500" y="674" class="l" style="fill:#d0d0d4" text-anchor="middle">0</text>
<use href="#stp" x="2102" y="667.500"/>
<text x="2147.500" y="675" class="l" textLength="34.500" lengthAdjust="spacingAndGlyphs">Line</text>
<text x="2250.500" y="674" class="l" style="fill:#d0d0d4" text-anchor="middle">0</text>
<use href="#stp" x="2306" y="667.500"/>
<rect x="2381.500" y="712" width="146.500" height="31" rx="6" fill="#00bfcc"/>
<text x="2391" y="734" class="b" style="fill:#fff" textLength="128" lengthAdjust="spacingAndGlyphs">Save as preset</text>

<!-- TIMELINE -->
<g clip-path="url(#pT)">
<rect x="14" y="763" width="2532" height="592" fill="#1b1b1d"/>
<rect x="14" y="763" width="2532" height="49" fill="#2a2a2e"/>
<rect x="14" y="812" width="2532" height="1" fill="#0f0f11"/>
<rect x="181" y="813" width="1" height="542" fill="#212123"/>
<rect x="257.500" y="998" width="2280" height="36" fill="#232325"/>
<rect x="1007" y="1043" width="1531" height="108" fill="#1f1f21"/>
</g>
<!-- toolbar left -->
<path class="d" d="M30 776L46 788 39 790 43 799 39.500 801 35.500 792 30 796Z" stroke-width="1.800"/>
<use href="#chev" x="71.500" y="788" stroke="#8a8a8e"/>
<rect x="97.500" y="775" width="1" height="25" fill="#46464a"/>
<path class="d" d="M120 778H128a8.500 8.500 0 0 1 0 17H120"/><path class="d" d="M123 775l-3 3 3 3" stroke-width="1.600"/>
<path d="M194 778H186a8.500 8.500 0 0 0 0 17H194M191 775l3 3-3 3" fill="none" stroke="#3c3c40" stroke-width="2" stroke-linecap="round"/>
<path class="d" d="M240 778H244.500V796H240M254 778H249.500V796H254" stroke-width="1.800"/>
<path class="d" d="M311 778H306V796H311" stroke-width="1.800"/><path d="M301 778V796" stroke="#c8c8cc" stroke-width="2" stroke-dasharray="2 2"/>
<path class="d" d="M361 778H366V796H361" stroke-width="1.800"/><path d="M372 778V796" stroke="#c8c8cc" stroke-width="2" stroke-dasharray="2 2"/>
<path class="d" d="M418 780H435M423 780V777H430V780M420.500 780V798H432.500V780"/>

<!-- toolbar right -->
<rect x="1957" y="776" width="9.500" height="16" rx="4" class="d"/>
<path class="d" d="M1953 785a8.500 8.500 0 0 0 17 0M1961.500 793.500V798M1955 799H1968" stroke-width="1.600"/>
<rect x="2003.500" y="775" width="1" height="24" fill="#343438"/>
<rect x="2028" y="769" width="36" height="36" rx="6" fill="#151517"/>
<rect x="2089" y="769" width="36" height="36" rx="6" fill="#151517"/>
<rect x="2033" y="783" width="9" height="10" rx="1" fill="#00bcc8"/>
<rect x="2050" y="783" width="10" height="10" rx="1" fill="#00bcc8"/>
<path d="M2048 788H2044M2046 785.500L2043.500 788 2046 790.500" fill="none" stroke="#00bcc8" stroke-width="1.300"/>
<rect x="2093.500" y="783" width="26.500" height="9" fill="#00bcc8"/><rect x="2106" y="783" width="2" height="9" fill="#151517"/>
<path d="M2107 774.500v3M2100 776l1.500 2.500M2114 776l-1.500 2.500M2107 796.500v3M2100 799l1.500-2.500M2114 799l-1.500-2.500" stroke="#00bcc8" stroke-width="1.500"/>
<path class="d" d="M2165 783H2157a3.500 3.500 0 0 0 0 9H2165M2169 783H2177a3.500 3.500 0 0 1 0 9H2169M2160 787.500H2174"/>
<path class="d" d="M2222 782H2214V793H2222M2230 782H2239V793H2230M2226 778V797" stroke-width="1.800"/>
<rect x="2256.500" y="775" width="1" height="24" fill="#343438"/>
<path class="d" d="M2282 793H2275V778H2300V787M2279 778V782M2284 778V783M2289 778V782M2295 778V783" stroke-width="1.600"/>
<circle class="d" cx="2291" cy="791" r="5" stroke-width="1.600"/><path class="d" d="M2295 795l3 3" stroke-width="1.600"/>
<circle class="d" cx="2330" cy="787" r="9"/><path class="d" d="M2326 787H2334M2336.500 793.500l2 2"/>
<rect x="2361" y="786" width="137" height="2.500" fill="#333336"/>
<rect x="2354.500" y="786" width="10" height="2.500" fill="#eee"/>
<rect x="2361" y="778" width="12" height="18" rx="6" fill="#f2f2f2"/>
<circle class="d" cx="2521.500" cy="787" r="9"/><path class="d" d="M2517.500 787H2525.500M2521.500 783V791M2528 793.500l2 2"/>

<!-- ruler -->
<use href="#tk" x="257.500" y="820"/><use href="#tk" x="620.200" y="820"/><use href="#tk" x="982.900" y="820"/><use href="#tk" x="1345.600" y="820"/><use href="#tk" x="1708.300" y="820"/><use href="#tk" x="2071" y="820"/>
<g transform="translate(2433.700 820)"><rect x="72.500" width="1" height="7" fill="#3f3f43"/></g>
<g fill="#4a4a4e"><rect x="257" y="819" width="1" height="16"/><rect x="619.700" y="819" width="1" height="16"/><rect x="982.400" y="819" width="1" height="16"/><rect x="1345.100" y="819" width="1" height="16"/><rect x="1707.800" y="819" width="1" height="16"/><rect x="2070.500" y="819" width="1" height="16"/><rect x="2433.200" y="819" width="1" height="16"/></g>
<text x="261.500" y="832.500" class="tl">00:00</text><text x="624.500" y="832.500" class="tl">00:05</text><text x="987" y="832.500" class="tl">00:10</text><text x="1350" y="832.500" class="tl">00:15</text><text x="1713" y="832.500" class="tl">00:20</text><text x="2077" y="832.500" class="tl">00:25</text><text x="2439.500" y="832.500" class="tl">00:30</text>

<!-- track heads -->
<rect x="20" y="998" width="149" height="36" rx="5" fill="#202022"/>
<rect x="20" y="1079" width="149" height="36" rx="5" fill="#202022"/>
<text x="28.500" y="1024" class="sv" font-size="21" fill="#5c5c60" textLength="23" lengthAdjust="spacingAndGlyphs">TI</text>
<circle cx="77" cy="1016.500" r="12" fill="#2c2c2f"/><circle cx="112" cy="1016.500" r="12" fill="#2c2c2f"/><circle cx="149" cy="1016.500" r="12" fill="#242427"/>
<use href="#lock" x="77" y="1016.500"/><use href="#eye" x="112" y="1016.500"/>
<rect x="32" y="1089" width="17" height="15" fill="none" stroke="#6a6a6e" stroke-width="1.500"/><path d="M39 1094l3 2.500-3 2.500Z" fill="#6a6a6e"/>
<circle cx="77" cy="1097" r="12" fill="#2c2c2f"/><circle cx="112" cy="1097" r="12" fill="#2c2c2f"/><circle cx="149" cy="1097" r="12" fill="#2c2c2f"/>
<use href="#lock" x="77" y="1097"/><use href="#eye" x="112" y="1097"/>
<path d="M143 1094H145L149 1091V1103L145 1100H143ZM152 1093.500a4.500 4.500 0 0 1 0 7M154.500 1091a8 8 0 0 1 0 12" fill="none" stroke="#c8c8cc" stroke-width="1.400"/>
<rect x="188" y="1068" width="55" height="57" rx="5" fill="#2a2a2c" stroke="#454548" stroke-width="1" stroke-dasharray="2 2"/>
<path class="d" d="M213 1087L220 1076 223 1078 216 1089 212 1090ZM209 1093H222" stroke-width="1.600"/>
<text x="215.500" y="1113" font-size="16" text-anchor="middle" fill="#b8b8bc" textLength="45.500" lengthAdjust="spacingAndGlyphs">Cover</text>

<!-- clips -->
<rect x="619" y="1002" width="222" height="29" rx="3" fill="#994a38" stroke="#f2f2f2" stroke-width="2.500"/>
<rect x="626" y="1006" width="99" height="21" rx="2" fill="#a85a48"/>
<text x="631" y="1021" font-size="16" fill="#ead9d3" textLength="92" lengthAdjust="spacingAndGlyphs">Default text</text>

<g clip-path="url(#vcl)">
<rect x="257" y="1043" width="750" height="108" fill="#004f58"/>
<rect x="257" y="1043" width="750" height="28" fill="#0a5860"/>
<rect x="262" y="1047" width="641" height="21" rx="3" fill="#11626a"/>
<rect x="907" y="1047" width="95" height="21" rx="3" fill="#11626a"/>
<svg x="258" y="1071" width="75" height="56" viewBox="0 0 710 398" preserveAspectRatio="none"><use href="#sky"/></svg>
<svg x="333" y="1071" width="75" height="56" viewBox="0 0 710 398" preserveAspectRatio="none"><use href="#sky"/></svg>
<svg x="408" y="1071" width="75" height="56" viewBox="0 0 710 398" preserveAspectRatio="none"><use href="#sky"/></svg>
<svg x="483" y="1071" width="75" height="56" viewBox="0 0 710 398" preserveAspectRatio="none"><use href="#sky"/></svg>
<svg x="558" y="1071" width="75" height="56" viewBox="0 0 710 398" preserveAspectRatio="none"><use href="#sky"/></svg>
<svg x="633" y="1071" width="75" height="56" viewBox="0 0 710 398" preserveAspectRatio="none"><use href="#sky"/></svg>
<svg x="708" y="1071" width="75" height="56" viewBox="0 0 710 398" preserveAspectRatio="none"><use href="#sky"/></svg>
<svg x="783" y="1071" width="75" height="56" viewBox="0 0 710 398" preserveAspectRatio="none"><use href="#sky"/></svg>
<svg x="858" y="1071" width="75" height="56" viewBox="0 0 710 398" preserveAspectRatio="none"><use href="#sky"/></svg>
<svg x="933" y="1071" width="74" height="56" viewBox="0 0 710 398" preserveAspectRatio="none"><use href="#sky"/></svg>
<rect x="557.500" y="1107" width="2" height="7" fill="#223"/>
<circle cx="659" cy="1111" r="3.500" fill="none" stroke="#2a2a40" stroke-width="1.800"/><circle cx="675" cy="1112" r="3.500" fill="none" stroke="#2a2a40" stroke-width="1.800"/>
<path d="M660 1110L666 1102 668 1092 671 1093 671 1103 675 1111 667 1107Z" fill="#26264a"/>
</g>
<text x="266.500" y="1063" font-size="16.500" fill="#dbe8e8" textLength="631.500" lengthAdjust="spacingAndGlyphs">Motocross riders overcome the jump in slow motion. Jumping on a springboard.</text>
<text x="910.500" y="1063" font-size="16.500" fill="#dbe8e8" textLength="87.500" lengthAdjust="spacingAndGlyphs">00:00:10:11</text>

<!-- scrollbar -->
<rect x="183" y="1344" width="2351" height="6" rx="3" fill="#323235"/>

<!-- playhead -->
<rect x="1008" y="830" width="2" height="505" fill="#d8d8d8"/>
<path d="M1003.500 815.500a2 2 0 0 1 2-2h7a2 2 0 0 1 2 2v10.500l-5.500 6.500-5.500-6.500Z" fill="#1b1b1d" stroke="#f2f2f2" stroke-width="2.500" stroke-linejoin="round"/>

<!-- RED HIGHLIGHTS -->
<g fill="none" stroke="#ed1c24" stroke-width="3">
<rect x="191.500" y="56" width="78" height="65"/>
<rect x="20.500" y="129" width="164" height="410"/>
<rect x="1866" y="51.500" width="692.500" height="707"/>
</g>
</svg>
</body>
</html>
